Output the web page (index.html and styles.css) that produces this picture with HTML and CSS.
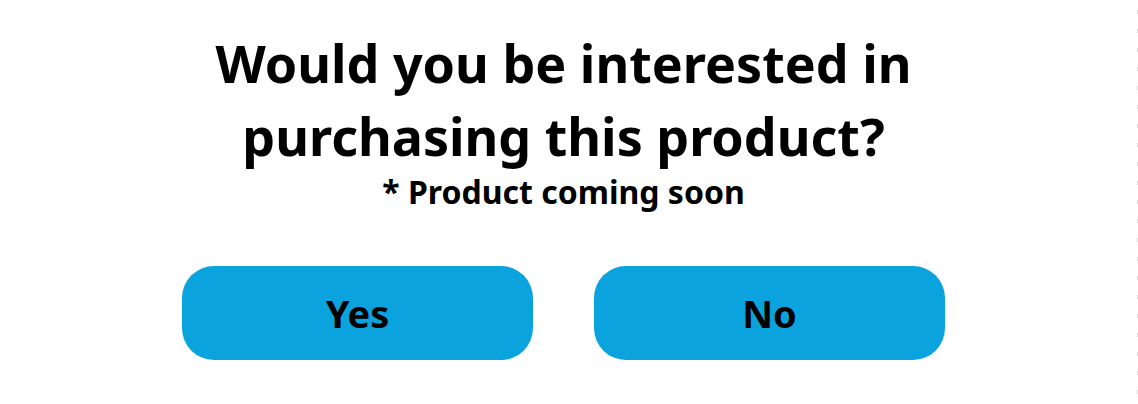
FILE: index.html
```html
<!DOCTYPE html>
<html lang="en">
<head>
<meta charset="utf-8">
<link rel="stylesheet" href="styles.css">
</head>
<body>
<div class="page">
  <main class="survey">
    <h1 class="title">Would you be interested in<br>purchasing this product?</h1>
    <p class="note">* Product coming soon</p>
    <div class="actions">
      <button class="btn">Yes</button>
      <button class="btn">No</button>
    </div>
  </main>
  <div class="edge"></div>
</div>
</body>
</html>
```
FILE: styles.css
```css
html, body {
  margin: 0;
  padding: 0;
  background: #ffffff;
}
.page {
  display: flex;
  width: 1138px;
  height: 404px;
  overflow: hidden;
}
.survey {
  flex: 1;
  display: flex;
  flex-direction: column;
  align-items: center;
  padding-top: 26px;
  padding-right: 10px;
  font-family: "Noto Sans", sans-serif;
  color: #000;
}
.title {
  margin: 0;
  font-size: 52px;
  font-weight: 700;
  line-height: 73px;
  text-align: center;
}
.note {
  margin: 0;
  font-size: 32px;
  font-weight: 700;
  line-height: 40px;
}
.actions {
  display: flex;
  gap: 61px;
  margin-top: 54px;
}
.btn {
  width: 351px;
  height: 94px;
  border: none;
  border-radius: 32px;
  background: #0ba3dd;
  color: #000;
  font-family: inherit;
  font-size: 38px;
  font-weight: 700;
  padding: 0;
}
.edge {
  width: 1px;
  background: repeating-linear-gradient(to bottom, transparent 0, transparent 10px, #d8d8d8 10px, #d8d8d8 14px, transparent 14px, transparent 19px);
}
```
